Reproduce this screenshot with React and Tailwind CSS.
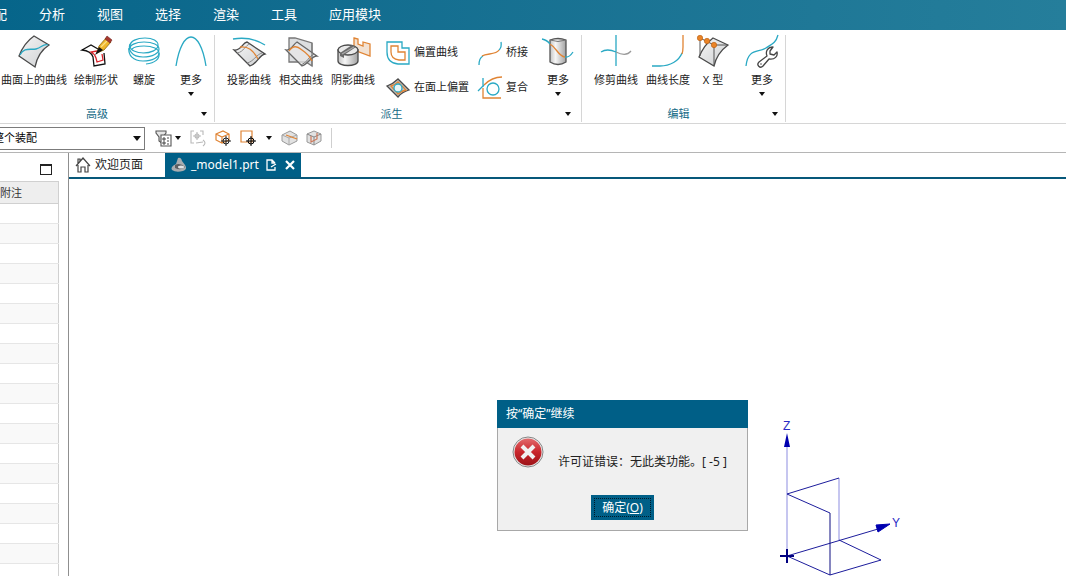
import React, { useState } from 'react';

const TEAL = '#2aa9c4';
const ORANGE = '#e08434';
const DARK = '#4a4a4a';

// ── Small shared bits ────────────────────────────────────────────────────────
const Caret = ({ className = '' }) => (
  <svg viewBox="0 0 6 4" className={`w-1.5 h-1 ${className}`} aria-hidden="true">
    <path d="M0 0h6L3 4z" fill="#111" />
  </svg>
);

const Icon = ({ size = 32, children }) => (
  <svg
    width={size}
    height={size}
    viewBox={`0 0 ${size} ${size}`}
    fill="none"
    strokeWidth="1.3"
    className="overflow-visible flex-shrink-0"
    aria-hidden="true"
  >
    {children}
  </svg>
);

const Shades = () => (
  <svg width="0" height="0" className="absolute" aria-hidden="true">
    <defs>
      <linearGradient id="sheet" x1="0" y1="0" x2="1" y2="1">
        <stop offset="0" stopColor="#f6f6f6" />
        <stop offset="1" stopColor="#cdcfd1" />
      </linearGradient>
      <linearGradient id="barrel" x1="0" y1="0" x2="1" y2="0">
        <stop offset="0" stopColor="#c4c4c4" />
        <stop offset="0.35" stopColor="#f6f6f6" />
        <stop offset="1" stopColor="#a2a2a2" />
      </linearGradient>
      <linearGradient id="alarm" x1="0" y1="0" x2="0" y2="1">
        <stop offset="0" stopColor="#e26a6c" />
        <stop offset="0.5" stopColor="#c9252b" />
        <stop offset="1" stopColor="#9c1218" />
      </linearGradient>
    </defs>
  </svg>
);

// ── Ribbon icons ─────────────────────────────────────────────────────────────
const CurveOnSurface = () => (
  <Icon>
    <path d="M16 1L31 10Q20 17 17 32L1 21Q6 8 16 1z" fill="url(#sheet)" stroke={DARK} />
    <path d="M2 20C6 12 12 15 18 14S25 8 30 10" stroke={TEAL} />
  </Icon>
);

const DrawShape = () => (
  <Icon>
    <path d="M18 14L11 10L2 15Q11 16 13 22L14 31L25 29L24 18" stroke="#111" fill="#fff" />
    <path d="M17 16L11 17Q15 19 16 23L17 27L23 25L22 19" stroke="#d8232a" />
    <path d="M17 18L19 11L26 3L31 7L24 15z" fill="#f0b72c" stroke="#8a6410" strokeWidth="0.8" />
    <path d="M21 12L28 5" stroke="#f9df86" />
    <path d="M25 4L27 1L32 5L30 8z" fill="#a8382f" stroke="#6e2320" strokeWidth="0.6" />
    <path d="M15 20L19 12L23 15z" fill="#111" />
  </Icon>
);

const Helix = () => (
  <Icon>
    <g stroke={TEAL} strokeWidth="1.2">
      <path d="M16 18C8 18 2 15 2 11C2 6 9 3 17 3C25 3 30 6 30 10C30 15 23 18 15 18" />
      <path d="M2 9C0 14 3 22 15 22C25 22 31 18 31 14C31 10 25 7 16 7C8 7 1 10 1 15" />
      <path d="M1 13C0 20 5 26 15 26C25 26 31 22 31 18C31 14 25 11 16 11C10 11 6 12 4 14" />
      <path d="M31 18C32 24 27 28 18 29" />
    </g>
  </Icon>
);

const Arch = () => (
  <Icon>
    <path d="M1 31C4 12 10 2 16 2S28 12 31 31" stroke={TEAL} />
  </Icon>
);

const ProjectCurve = () => (
  <Icon>
    <path d="M1 15C8 16 9 8 14 7L32 19C26 20 24 29 17 31z" fill="url(#sheet)" stroke={DARK} />
    <path d="M4 18C11 17 12 10 17 9M14 28C20 27 24 19 29 18" stroke="#8b8b8b" strokeWidth="1" />
    <path d="M7 12C15 11 20 15 25 24" stroke={ORANGE} />
    <path d="M0 4Q18 1 32 10" stroke={TEAL} />
  </Icon>
);

const IntersectCurve = () => (
  <Icon>
    <path d="M4 3H10L27 8V31L21 27H4z" fill="#dcdee0" stroke="#777" />
    <path d="M1 15C7 16 8 9 12 7L32 21C26 21 23 29 17 31z" fill="#e8e8e8" fillOpacity="0.7" stroke="#666" />
    <path d="M16 30C22 28 24 21 29 19M27 8V31" stroke="#777" strokeWidth="1" />
    <path d="M4 16C8 10 12 11 17 15S24 19 27 26" stroke={ORANGE} />
  </Icon>
);

const ShadowCurve = () => (
  <Icon>
    <path d="M17 3L21 4V9L26 11V7L33 9V21L17 15z" fill="#f2e2d3" stroke={ORANGE} />
    <path d="M1 15V26C1 32 21 32 21 26V15z" fill="url(#barrel)" stroke={DARK} />
    <ellipse cx="11" cy="15" rx="10" ry="5" fill="#e9e9e9" stroke={DARK} />
    <path d="M3 18L15 10L19 12L7 20V23L3 21z" fill="#6a6a6a" />
    <path d="M5 19L17 12" stroke="#aaa" />
  </Icon>
);

const OffsetCurve = () => (
  <Icon size={24}>
    <path d="M1 1H16V7H23V23H12Q1 22 1 11z" stroke={TEAL} />
    <path d="M5 5H12V11H19V19H13Q5 18 5 11z" stroke={ORANGE} />
  </Icon>
);

const OffsetInFace = () => (
  <Icon size={24}>
    <path d="M1 10Q7 8 12 3L23 14Q16 16 12 21z" fill="#c4c4c4" stroke={DARK} />
    <path d="M5 10Q9 9 12 6L20 14Q15 15 12 18z" stroke={ORANGE} />
    <circle cx="12" cy="12" r="4" stroke={TEAL} fill="#e6f4f6" />
  </Icon>
);

const Bridge = () => (
  <Icon size={24}>
    <path d="M1 24Q1 17 5 15M21 9Q24 6 23 1" stroke={TEAL} />
    <path d="M4 15C9 12 18 14 21 9" stroke={ORANGE} />
  </Icon>
);

const Composite = () => (
  <Icon size={24}>
    <path d="M5 12V22H23M6 9Q14 1 24 1" stroke={ORANGE} />
    <path d="M5 2V11M0 15Q3 12 6 9" stroke={TEAL} />
    <circle cx="15" cy="13" r="6" stroke={TEAL} />
  </Icon>
);

const MoreDerived = () => (
  <Icon>
    <path d="M8 5Q16 2 24 5V27Q16 32 8 27z" fill="url(#barrel)" stroke="#555" />
    <path d="M8 5Q16 8 24 5" stroke="#777" strokeWidth="1" />
    <path d="M0 4Q5 5 8 9M23 22Q27 23 31 17" stroke={TEAL} />
    <path d="M8 9C15 13 16 21 23 22" stroke={ORANGE} />
  </Icon>
);

const TrimCurve = () => (
  <Icon>
    <path d="M16 0V31M1 17Q7 13 16 17" stroke={TEAL} />
    <path d="M16 17C22 20 27 21 31 16" stroke="#999" />
  </Icon>
);

const CurveLength = () => (
  <Icon>
    <path d="M0 31H8C18 31 27 26 30 18" stroke={TEAL} />
    <path d="M31 0V12Q31 16 30 19" stroke={ORANGE} />
  </Icon>
);

const XForm = () => (
  <Icon>
    <path d="M16 3L31 10Q20 18 17 31L2 22Q7 10 16 3z" fill="url(#sheet)" stroke={DARK} />
    <path d="M3 3V21M3 3L17 10L31 10M17 10V30" stroke="#555" strokeWidth="1" />
    <g fill="#ea8427" stroke="#b65c13" strokeWidth="0.6">
      <circle cx="3" cy="3" r="2.7" />
      <circle cx="10" cy="6" r="2.7" />
      <circle cx="17" cy="10" r="2.7" />
    </g>
  </Icon>
);

const MoreEdit = () => (
  <Icon>
    <path d="M0 31C2 13 12 18 20 13S30 7 32 0" stroke={TEAL} />
    <path
      d="M27 12C22 12 19 16 21 21L13 27C10 30 14 34 17 31L23 24C29 25 32 21 31 17L28 20L24 19L24 16z"
      fill="#fff"
      stroke="#444"
      strokeLinejoin="round"
    />
    <circle cx="15" cy="29" r="0.8" fill="#444" />
  </Icon>
);

// ── Ribbon buttons and groups ────────────────────────────────────────────────
const BigButton = ({ icon, label, width = 'w-12', more }) => (
  <button type="button" className={`${width} flex flex-col items-center flex-shrink-0 hover:bg-sky-50`}>
    {icon}
    <span className="mt-[5px] leading-4 whitespace-nowrap">{label}</span>
    {more && <Caret className="mt-1" />}
  </button>
);

const SmallButton = ({ icon, label }) => (
  <button type="button" className="h-[35px] flex items-center gap-1 whitespace-nowrap hover:bg-sky-50">
    {icon}
    <span>{label}</span>
  </button>
);

const RibbonGroup = ({ title, className = '', children }) => (
  <section className={`flex flex-col justify-between flex-shrink-0 border-r border-[#d6d6d6] ${className}`}>
    <div className="flex gap-1">{children}</div>
    <div className="flex items-center h-4">
      <h2 className="flex-1 text-center leading-4 text-[#146a86]">{title}</h2>
      <button type="button" aria-label={`${title}选项`} className="w-5 h-4 flex items-center justify-center">
        <Caret />
      </button>
    </div>
  </section>
);

const Ribbon = () => (
  <div className="flex h-[94px] pt-[5px] pb-px border-b border-[#d6d6d6] bg-white">
    <RibbonGroup title="高级" className="-ml-4 pl-4">
      <BigButton icon={<CurveOnSurface />} label="曲面上的曲线" width="w-[68px]" />
      <BigButton icon={<DrawShape />} label="绘制形状" />
      <BigButton icon={<Helix />} label="螺旋" width="w-10" />
      <BigButton icon={<Arch />} label="更多" width="w-[46px]" more />
    </RibbonGroup>

    <RibbonGroup title="派生" className="pl-[10px] pr-[3px]">
      <BigButton icon={<ProjectCurve />} label="投影曲线" />
      <BigButton icon={<IntersectCurve />} label="相交曲线" />
      <BigButton icon={<ShadowCurve />} label="阴影曲线" />
      <div className="flex flex-col pl-[5px]">
        <SmallButton icon={<OffsetCurve />} label="偏置曲线" />
        <SmallButton icon={<OffsetInFace />} label="在面上偏置" />
      </div>
      <div className="flex flex-col pl-[5px]">
        <SmallButton icon={<Bridge />} label="桥接" />
        <SmallButton icon={<Composite />} label="复合" />
      </div>
      <div className="pl-[6px]">
        <BigButton icon={<MoreDerived />} label="更多" width="w-10" more />
      </div>
    </RibbonGroup>

    <RibbonGroup title="编辑" className="pl-[10px]">
      <BigButton icon={<TrimCurve />} label="修剪曲线" />
      <BigButton icon={<CurveLength />} label="曲线长度" />
      <BigButton icon={<XForm />} label="X 型" width="w-[34px]" />
      <div className="pl-2 pr-[3px]">
        <BigButton icon={<MoreEdit />} label="更多" width="w-10" more />
      </div>
    </RibbonGroup>
  </div>
);

// ── Selection bar ────────────────────────────────────────────────────────────
const Crosshair = ({ x, y, color = '#222' }) => (
  <g stroke={color} strokeWidth="1">
    <circle cx={x} cy={y} r="3" />
    <path d={`M${x - 5} ${y}h10M${x} ${y - 5}v10`} />
  </g>
);

const ToolButton = ({ label, children }) => (
  <button type="button" aria-label={label} className="hover:bg-sky-50">
    <Icon size={16}>{children}</Icon>
  </button>
);

const SelectionBar = () => (
  <div className="flex items-center h-[29px] border-b border-[#b5b5b5] bg-white">
    <div className="relative -ml-3">
      <select
        aria-label="选择范围"
        className="appearance-none block w-[157px] h-[23px] pl-1 border border-[#7b7b7b] bg-white text-[11px] text-black"
      >
        <option>整个装配</option>
        <option>仅在工作部件内</option>
      </select>
      <svg viewBox="0 0 8 5" className="absolute right-1 top-[9px] w-2 h-[5px] pointer-events-none" aria-hidden="true">
        <path d="M0 0h8L4 5z" fill="#111" />
      </svg>
    </div>

    <div className="flex items-center gap-[9px] pl-[10px]">
      <div className="flex items-center gap-1">
        <ToolButton label="类型过滤器">
          <path d="M1 1H11V3L8 7V14L4 11V7L1 3z" stroke="#555" strokeWidth="1.1" fill="#e5e5e5" />
          <path d="M6 5H16V16H6z" fill="#fff" stroke="#555" strokeWidth="1.1" />
          <path d="M8 8h2v2h-2zM8 12h2v2h-2zM12 8h2M12 11h2M12 14h2" stroke="#333" strokeWidth="0.9" />
        </ToolButton>
        <Caret />
      </div>
      <ToolButton label="重置过滤器">
        <g stroke="#b9b9b9" strokeWidth="1.1">
          <path d="M4 1H1V13H4M10 1H13V5M6 13L13 12M13 10Q17 13 13 16" />
          <path d="M3 6h8M7 2v8" />
          <circle cx="7" cy="6" r="2" />
        </g>
      </ToolButton>
      <ToolButton label="选择常规对象">
        <path d="M1 4L8 1L14 4V10L7 13L1 10zM1 4L7 7L14 4M7 7V13" stroke={ORANGE} strokeWidth="1.2" />
        <Crosshair x={11} y={11} />
      </ToolButton>
      <div className="flex items-center gap-[10px]">
        <ToolButton label="框选">
          <path d="M1 1H12V12H1z" stroke={ORANGE} strokeWidth="1.2" />
          <Crosshair x={11} y={11} color="#000" />
        </ToolButton>
        <Caret />
      </div>
      <ToolButton label="选择体">
        <path d="M1 5L9 1L16 5V11L8 15L1 11z" fill="#e2e2e2" stroke="#999" strokeWidth="1" />
        <path d="M1 5L8 8L16 5M8 8V15" stroke="#aaa" strokeWidth="1" />
        <path d="M5 5L16 9" stroke={ORANGE} />
      </ToolButton>
      <ToolButton label="选择面">
        <path d="M1 4L8 1L15 4V11L8 15L1 12z" fill="#e2e2e2" stroke="#999" strokeWidth="1" />
        <path d="M1 4L8 7L15 4M8 7V15" stroke="#888" strokeWidth="1" />
        <path d="M5 6V12L11 9V3" stroke="#cc7a5c" strokeWidth="1.2" />
      </ToolButton>
      <div className="w-px h-5 bg-[#cfcfcf]" />
    </div>
  </div>
);

// ── Navigator panel on the left ──────────────────────────────────────────────
const rows = Array.from({ length: 19 }, (_, i) => i);

const Navigator = () => (
  <aside className="w-[69px] flex-shrink-0 overflow-hidden border-r border-[#8f8f8f] bg-white">
    <div className="h-7 flex items-center justify-end pr-4 pt-1">
      <button type="button" aria-label="最大化" className="w-3 h-[11px] border border-t-2 border-[#222]" />
    </div>
    <table className="w-[59px] border-collapse border-r border-[#d0d0d0]">
      <thead>
        <tr className="h-[22px] bg-[#eeeeee] border-y border-[#d0d0d0]">
          <th scope="col" className="text-left font-normal text-[#333] leading-4">附注</th>
        </tr>
      </thead>
      <tbody>
        {rows.map(i => (
          <tr key={i} className="h-5 border-b border-[#e6e6e6] even:bg-[#f9f9f9]">
            <td />
          </tr>
        ))}
      </tbody>
    </table>
  </aside>
);

// ── Document tabs ────────────────────────────────────────────────────────────
const Tabs = () => (
  <div className="flex h-[26px] text-xs border-b-2 border-[#07587a] bg-white">
    <button type="button" className="flex items-center gap-1 w-24 pl-[6px] text-[#222]">
      <Icon size={16}>
        <path d="M1 9L8 1L15 9M3 8V15H6V10H10V15H13V8M3 6V2H5V4" stroke="#444" strokeWidth="1.2" />
      </Icon>
      欢迎页面
    </button>
    <div className="flex items-center gap-1 px-[6px] bg-[#005f87] text-white">
      <Icon size={16}>
        <path d="M7 1Q10 0 11 4L14 8Q17 12 12 14Q5 16 1 13Q-1 10 5 7z" fill="#a9adb0" />
        <path d="M4 8Q9 5 14 10Q10 14 4 11z" fill="#5c5f62" />
        <ellipse cx="10" cy="10" rx="3" ry="1.5" fill="#e2e5e7" />
      </Icon>
      <button type="button" className="pr-0.5">_model1.prt</button>
      <Icon size={12}>
        <path d="M8 11H2V1H7L10 4M10 8V11H6M7 1V4H10M6 8L11 5" stroke="#fff" />
      </Icon>
      <button type="button" aria-label="关闭" className="pl-1">
        <Icon size={10}>
          <path d="M1 1L9 9M9 1L1 9" stroke="#fff" strokeWidth="2.2" />
        </Icon>
      </button>
    </div>
  </div>
);

// ── Datum coordinate system in the graphics window ───────────────────────────
const DatumCsys = () => (
  <svg
    viewBox="0 0 140 164"
    className="absolute left-[701px] top-[236px] w-[140px] h-[164px]"
    fill="none"
    stroke="#1c1c9c"
    strokeWidth="1"
  >
    <path d="M17 141V30M69 63V125" stroke="#8d8de0" />
    <path d="M17 79L69 63M17 79L60 98M17 141L108 114M17 141L60 160M60 160L111 145M69 125L111 145" />
    <path d="M60 98V160" stroke="#0c0c80" />
    <path d="M17 18L20 32H14z" fill="#0000b0" stroke="none" />
    <path d="M120 109L106 110L108 117z" fill="#0000b0" stroke="#0000b0" />
    <path d="M10 141H24M17 134V148" stroke="#000080" strokeWidth="2" />
    <text x="13" y="15" fontSize="12" fontFamily="Liberation Sans, sans-serif" fill="#2a2ac4" stroke="none">Z</text>
    <text x="122" y="112" fontSize="12" fontFamily="Liberation Sans, sans-serif" fill="#2a2ac4" stroke="none">Y</text>
  </svg>
);

// ── Error dialog ─────────────────────────────────────────────────────────────
const ErrorDialog = ({ onClose }) => (
  <div
    role="alertdialog"
    aria-labelledby="dlg-title"
    aria-describedby="dlg-text"
    className="absolute left-[428px] top-[221px] w-[251px] bg-[#f0f0f0] text-xs"
  >
    <h1 id="dlg-title" className="h-7 px-[9px] leading-7 bg-[#005f87] text-white">按“确定”继续</h1>
    <div className="border border-t-0 border-[#a8a8a8] px-[14px] pt-2 pb-[10px]">
      <div className="flex gap-[14px]">
        <Icon size={32}>
          <circle cx="16" cy="16" r="15" fill="#ececec" stroke="#858585" strokeWidth="1" />
          <circle cx="16" cy="16" r="13.5" fill="url(#alarm)" />
          <path d="M10 10L22 22M22 10L10 22" stroke="#f1f1f1" strokeWidth="4" />
        </Icon>
        <p id="dlg-text" className="pt-4 leading-5 whitespace-nowrap text-[#222]">许可证错误：无此类功能。[ -5 ]</p>
      </div>
      <div className="flex justify-center pt-[23px]">
        <button type="button" onClick={onClose} className="p-[3px] bg-[#005f87] text-white">
          <span className="block px-[7px] leading-[17px] border border-dotted border-[#001b2a]">
            确定(<u>O</u>)
          </span>
        </button>
      </div>
    </div>
  </div>
);

// ── Main window ──────────────────────────────────────────────────────────────
const menus = ['装配', '分析', '视图', '选择', '渲染', '工具', '应用模块'];

const App = () => {
  const [showError, setShowError] = useState(true);

  return (
    <div className="h-screen flex flex-col overflow-hidden bg-white text-[11px] text-[#222] font-['Noto_Sans','Noto_Sans_CJK_SC',sans-serif]">
      <Shades />
      <nav className="h-[30px] flex-shrink-0 flex items-center gap-8 bg-linear-to-r from-[#06658a] to-[#257e9b] text-[13px] text-white">
        {menus.map(m => (
          <button key={m} type="button" className="whitespace-nowrap first:-ml-[19px]">{m}</button>
        ))}
      </nav>
      <Ribbon />
      <SelectionBar />

      <div className="flex flex-1 min-h-0">
        <Navigator />
        <main className="flex flex-col flex-1 min-w-0">
          <Tabs />
          <div className="relative flex-1 overflow-hidden bg-white">
            <DatumCsys />
            {showError && <ErrorDialog onClose={() => setShowError(false)} />}
          </div>
        </main>
      </div>
    </div>
  );
};

export default App;
